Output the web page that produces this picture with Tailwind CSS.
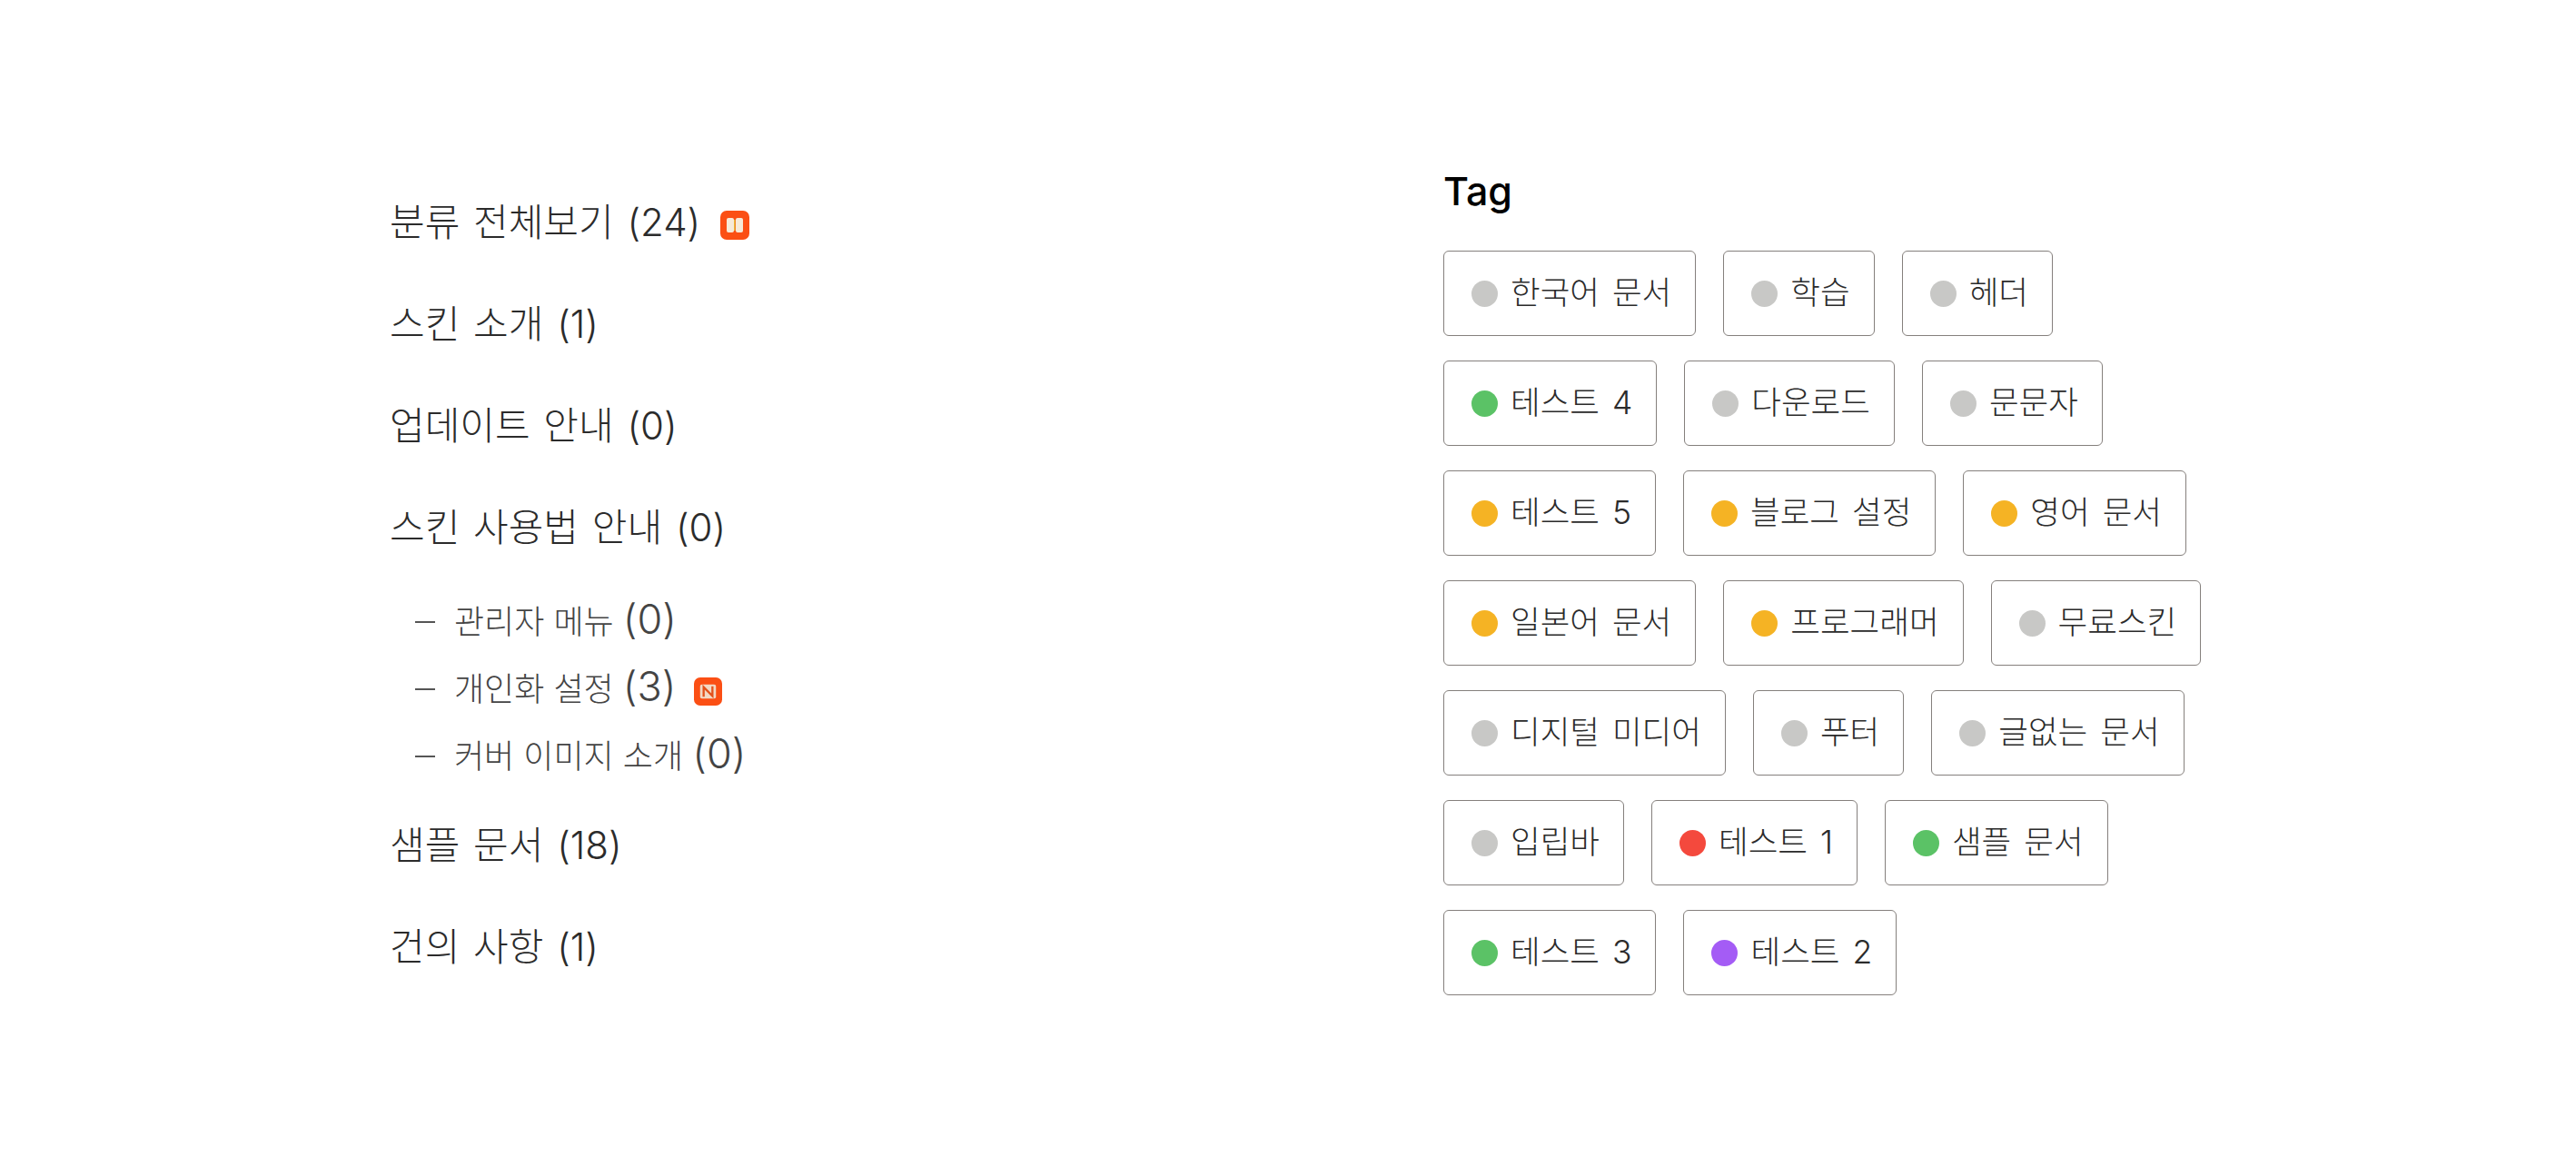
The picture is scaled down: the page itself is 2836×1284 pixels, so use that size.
<!DOCTYPE html>
<html>
  <head>
    <title>Category and Tag</title>
    <script src="https://cdn.jsdelivr.net/npm/@tailwindcss/browser@4"></script>
    <meta name="viewport" content="width=device-width">
  </head>

  <body class="bg-white font-['Inter','Noto_Sans_CJK_KR',sans-serif]">
    <main class="flex w-[2836px] h-[1284px]">

      <!-- category list -->
      <nav class="w-[1589px] pl-[429px] pt-[216px] text-[42px] leading-[58px] [word-spacing:3px] font-light text-[#2b2b2b]">
        <ul class="flex flex-col gap-[54px]">
          <li class="flex items-center">
            <span>분류 전체보기 (24)</span>
            <svg class="ml-[22px] w-[32px] h-[32px] mt-[6px]" viewBox="0 0 32 32">
              <rect width="32" height="32" rx="7" fill="#fb4f14"/>
              <rect x="7" y="8" width="8" height="16" rx="2" fill="#f6ead8"/>
              <rect x="17" y="8" width="8" height="16" rx="2" fill="#f6ead8"/>
              <rect x="15" y="10" width="1.5" height="12" fill="#e8b93a"/>
            </svg>
          </li>
          <li>스킨 소개 (1)</li>
          <li>업데이트 안내 (0)</li>
          <li>
            스킨 사용법 안내 (0)
            <ul class="flex flex-col gap-[22px] mt-[49px] pl-[28px] text-[36px] leading-[52px] [word-spacing:0px] text-[#444444]">
              <li class="flex items-center">
                <span class="w-[22px] h-[2px] mr-[21px] bg-[#555555]"></span>
                <span>관리자 메뉴 <span class="text-[45px] leading-none">(0)</span></span>
              </li>
              <li class="flex items-center">
                <span class="w-[22px] h-[2px] mr-[21px] bg-[#555555]"></span>
                <span>개인화 설정 <span class="text-[45px] leading-none">(3)</span></span>
                <svg class="ml-[20px] w-[31px] h-[31px] mt-[4px]" viewBox="0 0 32 32">
                  <rect width="32" height="32" rx="7" fill="#fb4f14"/>
                  <rect x="7" y="8" width="18" height="16" rx="2" fill="#f3d9c4"/>
                  <path d="M11 22V11l10 10V10" fill="none" stroke="#e2521c" stroke-width="2.4"/>
                </svg>
              </li>
              <li class="flex items-center">
                <span class="w-[22px] h-[2px] mr-[21px] bg-[#555555]"></span>
                <span>커버 이미지 소개 <span class="text-[45px] leading-none">(0)</span></span>
              </li>
            </ul>
          </li>
          <li class="-mt-[11px]">샘플 문서 (18)</li>
          <li>건의 사항 (1)</li>
        </ul>
      </nav>

      <!-- tag cloud -->
      <section class="pt-[182px] w-[860px]">
        <h2 class="text-[43px] leading-[56px] font-medium text-black">Tag</h2>
        <div class="flex flex-col gap-y-[27px] mt-[38px] text-[35.5px] [word-spacing:4px] font-light text-[#2b2b2b]">
          <div class="flex gap-x-[30px]">
            <a class="flex items-center gap-[14px] h-[94px] pl-[30px] pr-[26px] border border-[#85807d] rounded-[6px]"><span class="w-[29px] h-[29px] rounded-full bg-[#c8c8c6]"></span>한국어 문서</a>
            <a class="flex items-center gap-[14px] h-[94px] pl-[30px] pr-[26px] border border-[#85807d] rounded-[6px]"><span class="w-[29px] h-[29px] rounded-full bg-[#c8c8c6]"></span>학습</a>
            <a class="flex items-center gap-[14px] h-[94px] pl-[30px] pr-[26px] border border-[#85807d] rounded-[6px]"><span class="w-[29px] h-[29px] rounded-full bg-[#c8c8c6]"></span>헤더</a>
          </div>
          <div class="flex gap-x-[30px]">
            <a class="flex items-center gap-[14px] h-[94px] pl-[30px] pr-[26px] border border-[#85807d] rounded-[6px]"><span class="w-[29px] h-[29px] rounded-full bg-[#5bc266]"></span>테스트 4</a>
            <a class="flex items-center gap-[14px] h-[94px] pl-[30px] pr-[26px] border border-[#85807d] rounded-[6px]"><span class="w-[29px] h-[29px] rounded-full bg-[#c8c8c6]"></span>다운로드</a>
            <a class="flex items-center gap-[14px] h-[94px] pl-[30px] pr-[26px] border border-[#85807d] rounded-[6px]"><span class="w-[29px] h-[29px] rounded-full bg-[#c8c8c6]"></span>문문자</a>
          </div>
          <div class="flex gap-x-[30px]">
            <a class="flex items-center gap-[14px] h-[94px] pl-[30px] pr-[26px] border border-[#85807d] rounded-[6px]"><span class="w-[29px] h-[29px] rounded-full bg-[#f5b324]"></span>테스트 5</a>
            <a class="flex items-center gap-[14px] h-[94px] pl-[30px] pr-[26px] border border-[#85807d] rounded-[6px]"><span class="w-[29px] h-[29px] rounded-full bg-[#f5b324]"></span>블로그 설정</a>
            <a class="flex items-center gap-[14px] h-[94px] pl-[30px] pr-[26px] border border-[#85807d] rounded-[6px]"><span class="w-[29px] h-[29px] rounded-full bg-[#f5b324]"></span>영어 문서</a>
          </div>
          <div class="flex gap-x-[30px]">
            <a class="flex items-center gap-[14px] h-[94px] pl-[30px] pr-[26px] border border-[#85807d] rounded-[6px]"><span class="w-[29px] h-[29px] rounded-full bg-[#f5b324]"></span>일본어 문서</a>
            <a class="flex items-center gap-[14px] h-[94px] pl-[30px] pr-[26px] border border-[#85807d] rounded-[6px]"><span class="w-[29px] h-[29px] rounded-full bg-[#f5b324]"></span>프로그래머</a>
            <a class="flex items-center gap-[14px] h-[94px] pl-[30px] pr-[26px] border border-[#85807d] rounded-[6px]"><span class="w-[29px] h-[29px] rounded-full bg-[#c8c8c6]"></span>무료스킨</a>
          </div>
          <div class="flex gap-x-[30px]">
            <a class="flex items-center gap-[14px] h-[94px] pl-[30px] pr-[26px] border border-[#85807d] rounded-[6px]"><span class="w-[29px] h-[29px] rounded-full bg-[#c8c8c6]"></span>디지털 미디어</a>
            <a class="flex items-center gap-[14px] h-[94px] pl-[30px] pr-[26px] border border-[#85807d] rounded-[6px]"><span class="w-[29px] h-[29px] rounded-full bg-[#c8c8c6]"></span>푸터</a>
            <a class="flex items-center gap-[14px] h-[94px] pl-[30px] pr-[26px] border border-[#85807d] rounded-[6px]"><span class="w-[29px] h-[29px] rounded-full bg-[#c8c8c6]"></span>글없는 문서</a>
          </div>
          <div class="flex gap-x-[30px]">
            <a class="flex items-center gap-[14px] h-[94px] pl-[30px] pr-[26px] border border-[#85807d] rounded-[6px]"><span class="w-[29px] h-[29px] rounded-full bg-[#c8c8c6]"></span>입립바</a>
            <a class="flex items-center gap-[14px] h-[94px] pl-[30px] pr-[26px] border border-[#85807d] rounded-[6px]"><span class="w-[29px] h-[29px] rounded-full bg-[#f4493d]"></span>테스트 1</a>
            <a class="flex items-center gap-[14px] h-[94px] pl-[30px] pr-[26px] border border-[#85807d] rounded-[6px]"><span class="w-[29px] h-[29px] rounded-full bg-[#5bc266]"></span>샘플 문서</a>
          </div>
          <div class="flex gap-x-[30px]">
            <a class="flex items-center gap-[14px] h-[94px] pl-[30px] pr-[26px] border border-[#85807d] rounded-[6px]"><span class="w-[29px] h-[29px] rounded-full bg-[#5bc266]"></span>테스트 3</a>
            <a class="flex items-center gap-[14px] h-[94px] pl-[30px] pr-[26px] border border-[#85807d] rounded-[6px]"><span class="w-[29px] h-[29px] rounded-full bg-[#a45cf5]"></span>테스트 2</a>
          </div>
        </div>
      </section>
    </main>
  </body>
</html>
